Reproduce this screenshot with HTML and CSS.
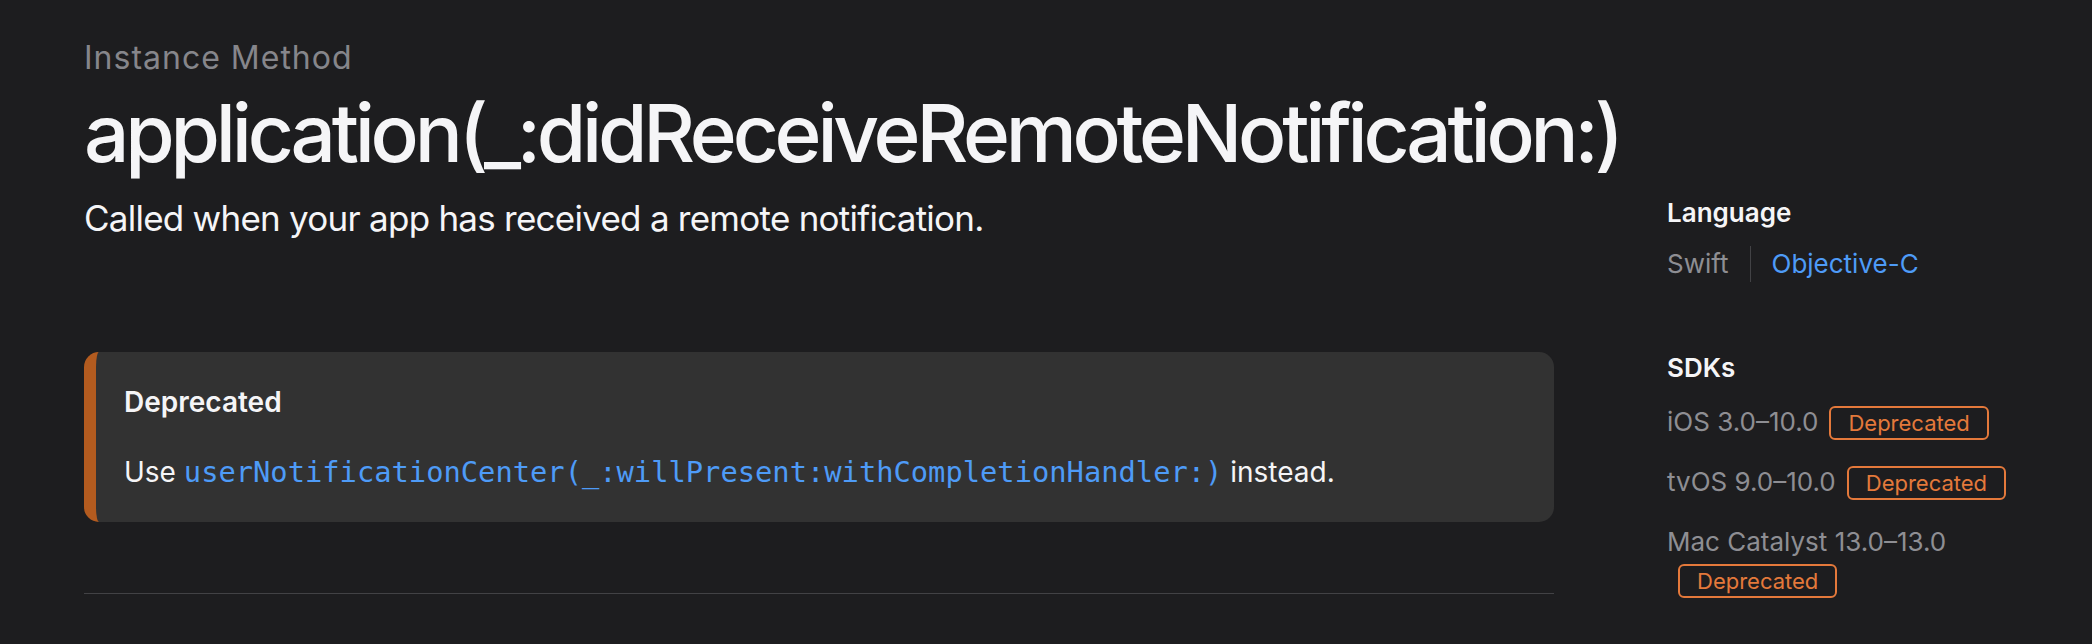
FILE: index.html
```html
<!DOCTYPE html>
<html lang="en">
<head>
<meta charset="utf-8">
<title>application(_:didReceiveRemoteNotification:)</title>
<link rel="stylesheet" href="styles.css">
</head>
<body>
<div class="page">
  <main class="main">
    <div class="eyebrow">Instance Method</div>
    <h1 class="title">application(_:didReceiveRemoteNotification:)</h1>
    <p class="abstract">Called when your app has received a remote notification.</p>
    <div class="aside">
      <p class="aside-label">Deprecated</p>
      <p class="aside-body">Use <a class="code-link">userNotificationCenter(_:willPresent:withCompletionHandler:)</a> instead.</p>
    </div>
    <div class="rule"></div>
  </main>
  <aside class="summary">
    <section class="summary-lang">
      <h2 class="summary-title">Language</h2>
      <div class="langs"><span class="lang">Swift</span><span class="sep"></span><span class="lang active">Objective-C</span></div>
    </section>
    <section class="summary-sdks">
      <h2 class="summary-title">SDKs</h2>
      <ul class="sdks">
        <li>iOS 3.0–10.0<span class="badge">Deprecated</span></li>
        <li>tvOS 9.0–10.0<span class="badge">Deprecated</span></li>
        <li>Mac Catalyst 13.0–13.0<span class="badge">Deprecated</span></li>
      </ul>
    </section>
  </aside>
</div>
</body>
</html>
```
FILE: styles.css
```css
body {
  margin: 0;
  background: #1d1d1f;
  color: #f5f5f7;
  font-family: Inter, "Noto Sans", sans-serif;
}

.page {
  display: flex;
  padding: 38px 25px 0 84px;
}

.main {
  flex: none;
  width: 1470px;
}

.eyebrow {
  font-size: 32px;
  line-height: 40px;
  letter-spacing: 1px;
  color: #86868b;
}

.title {
  margin: 11px 0 0;
  font-size: 80px;
  line-height: 88px;
  font-weight: 500;
  letter-spacing: -4.2px;
}

.abstract {
  margin: 18.7px 0 0;
  font-size: 35px;
  line-height: 44px;
  letter-spacing: -0.75px;
}

.aside {
  margin-top: 112.7px;
  background: #323232;
  border-left: 12px solid #b35b1f;
  border-radius: 15px;
  padding: 29.5px 28px 30.5px;
}

.aside-label {
  margin: 0;
  font-size: 28px;
  line-height: 40px;
  font-weight: 600;
}

.aside-body {
  margin: 30px 0 0;
  font-size: 28px;
  line-height: 40px;
}

.code-link {
  font-family: "DejaVu Sans Mono", "Liberation Mono", monospace;
  font-size: 28.75px;
  color: #4e9bf7;
}

.rule {
  margin-top: 71px;
  border-top: 1px solid #424245;
}

.summary {
  flex: none;
  width: 400px;
  margin-left: 113px;
  padding-top: 159px;
}

.summary-title {
  margin: 0;
  font-size: 26px;
  line-height: 32px;
  font-weight: 600;
  color: #f5f5f7;
}

.langs {
  display: flex;
  margin-top: 17px;
  font-size: 26px;
  line-height: 36px;
}

.lang {
  color: #8e8e93;
}

.lang.active {
  color: #4e9bf7;
}

.sep {
  width: 1px;
  background: #424245;
  margin: 0 21px;
}

.summary-sdks {
  margin-top: 70px;
}

.sdks {
  list-style: none;
  margin: 19px 0 0;
  padding: 0;
  font-size: 26px;
  line-height: 38px;
  color: #8e8e93;
}

.sdks li + li {
  margin-top: 22px;
}

.badge {
  display: inline-block;
  margin-left: 11px;
  padding: 0 17px;
  border: 2px solid #e4793b;
  border-radius: 6px;
  font-size: 22px;
  line-height: 30px;
  color: #e4793b;
}
```
